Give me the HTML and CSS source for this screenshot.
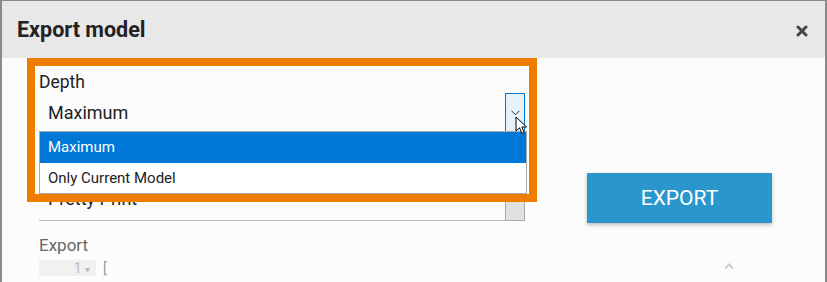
FILE: index.html
```html
<!DOCTYPE html>
<html>
<head>
  <meta charset="UTF-8">
  <title>Export model</title>
  <link rel="stylesheet" href="styles.css">
</head>
<body>
  <div class="window">
    <div class="header">
      <h2>Export model</h2>
      <button type="button" class="close" title="Schließen">
        <svg width="12" height="12" viewBox="0 0 12 12"><path d="M2 2 L10 10 M10 2 L2 10" stroke="#444" stroke-width="3" stroke-linecap="round"/></svg>
      </button>
    </div>
    <div class="content">
      <div class="form">
        <label class="field-label">Depth</label>
        <div class="select open">
          <span class="select-value">Maximum</span>
          <span class="select-btn">
            <svg width="9" height="6" viewBox="0 0 9 6"><path d="M0.5 0.8 L4.5 4.8 L8.5 0.8" fill="none" stroke="#333" stroke-width="1"/></svg>
          </span>
          <ul class="options">
            <li class="selected">Maximum</li>
            <li>Only Current Model</li>
          </ul>
          <svg class="cursor" width="14" height="20" viewBox="0 0 14 20"><path d="M1 1 L1 15 L4.5 11.8 L7 17.5 L9.2 16.5 L6.8 11 L11.5 11 Z" fill="#fff" stroke="#000" stroke-width="1" stroke-linejoin="round"/></svg>
        </div>
        <div class="select format">
          <span class="select-value">Pretty Print</span>
          <span class="select-btn plain"></span>
        </div>
        <label class="field-label muted">Export</label>
        <div class="code">
          <span class="gutter">1 <span class="fold">▾</span></span>
          <span class="code-text">[</span>
        </div>
      </div>
      <div class="actions">
        <button type="button" class="export">EXPORT</button>
        <span class="caret">
          <svg width="10" height="6" viewBox="0 0 10 6"><path d="M1 5.5 L5 1.5 L9 5.5" fill="none" stroke="#ccc" stroke-width="2"/></svg>
        </span>
      </div>
    </div>
    <div class="highlight"></div>
  </div>
</body>
</html>
```

FILE: styles.css
```css
body { margin: 0; font-family: Roboto, "Noto Sans", Arial, sans-serif; }
.window { position: relative; width: 827px; height: 282px; box-sizing: border-box; border: 2px solid #8a8a8a; border-top-width: 1px; border-bottom: none; background: #fcfcfc; overflow: hidden; }
.header { height: 57px; background: #e8e8e8; display: flex; align-items: center; justify-content: space-between; padding: 0 17px 0 15px; }
.header h2 { margin: 0; font-size: 21.5px; font-weight: bold; color: #222; }
.close { border: none; background: none; padding: 0; margin-top: 2px; cursor: pointer; display: flex; }
.content { display: flex; padding-left: 37px; }
.form { width: 486px; padding-top: 14px; }
.field-label { display: block; font-size: 17.5px; line-height: 21px; color: #222; }
.field-label.muted { color: #666; font-size: 17px; margin-top: 14px; }
.select { position: relative; height: 39px; display: flex; align-items: center; justify-content: space-between; margin-top: 0; }
.select-value { font-size: 18px; color: #222; padding-left: 9px; }
.select-btn { width: 18px; height: 37px; border: 1px solid #0078d7; background: #e5f1fb; display: flex; align-items: center; justify-content: center; }
.select-btn.plain { border-color: #aaa; background: #e1e1e1; }
.select.format { margin-top: 50px; border-bottom: 1px solid #bbb; height: 38px; }
.select.format .select-value { margin-top: -6px; }
.options { position: absolute; left: 0; top: 38px; width: 486px; margin: 0; padding: 0; list-style: none; background: #fff; border: 1px solid #aaa; z-index: 2; }
.options li { height: 30px; line-height: 30px; padding-left: 8px; font-size: 15px; color: #222; }
.options li.selected { height: 31px; line-height: 31px; background: #0078d7; color: #fff; }
.cursor { position: absolute; left: 476px; top: 23px; z-index: 3; }
.code { display: flex; align-items: center; height: 20px; margin-top: 2px; font-size: 14px; }
.gutter { width: 57px; background: #f1f1f1; color: #bbb; text-align: right; padding-right: 6px; box-sizing: border-box; }
.fold { font-size: 10px; }
.code-text { color: #999; padding-left: 7px; }
.actions { flex: 1; display: flex; flex-direction: column; align-items: flex-start; padding: 115px 0 0 62px; }
.export { width: 185px; height: 50px; border: none; border-radius: 0; background: #2b96cc; color: #fff; font-family: Roboto, sans-serif; font-size: 21px; cursor: pointer; box-shadow: 0 2px 4px rgba(0,0,0,0.25); }
.caret { margin: 40px 0 0 137px; display: flex; }
.highlight { position: absolute; left: 25px; top: 57px; width: 494px; height: 128px; border: 8px solid #f07d00; z-index: 4; pointer-events: none; }
```
